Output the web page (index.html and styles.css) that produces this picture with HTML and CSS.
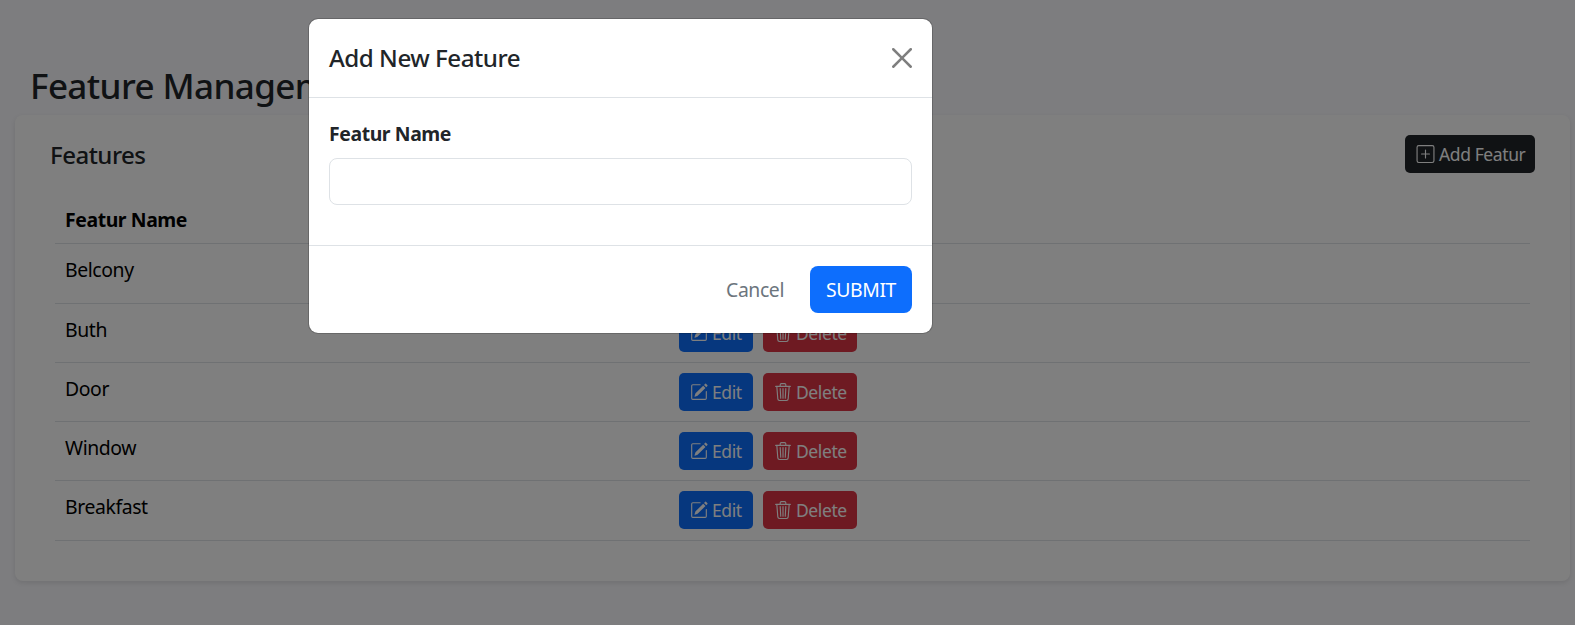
FILE: index.html
```html
<!DOCTYPE html>
<html lang="en">
<head>
<meta charset="utf-8">
<title>Feature Management</title>
<link rel="stylesheet" href="styles.css">
</head>
<body>
<svg class="sprite" aria-hidden="true">
  <symbol id="plus-square" viewBox="0 0 16 16"><path d="M14 1a1 1 0 0 1 1 1v12a1 1 0 0 1-1 1H2a1 1 0 0 1-1-1V2a1 1 0 0 1 1-1zM2 0a2 2 0 0 0-2 2v12a2 2 0 0 0 2 2h12a2 2 0 0 0 2-2V2a2 2 0 0 0-2-2z"/><path d="M8 4a.5.5 0 0 1 .5.5v3h3a.5.5 0 0 1 0 1h-3v3a.5.5 0 0 1-1 0v-3h-3a.5.5 0 0 1 0-1h3v-3A.5.5 0 0 1 8 4"/></symbol>
  <symbol id="pencil-square" viewBox="0 0 16 16"><path d="M15.502 1.94a.5.5 0 0 1 0 .706L14.459 3.69l-2-2L13.502.646a.5.5 0 0 1 .707 0l1.293 1.293zm-1.75 2.456-2-2L4.939 9.21a.5.5 0 0 0-.121.196l-.805 2.414a.25.25 0 0 0 .316.316l2.414-.805a.5.5 0 0 0 .196-.12z"/><path fill-rule="evenodd" d="M1 13.5A1.5 1.5 0 0 0 2.5 15h11a1.5 1.5 0 0 0 1.500-1.5v-6a.5.5 0 0 0-1 0v6a.5.5 0 0 1-.5.5h-11a.5.5 0 0 1-.5-.5v-11a.5.5 0 0 1 .5-.5H9a.5.5 0 0 0 0-1H2.500A1.500 1.500 0 0 0 1 2.500z"/></symbol>
  <symbol id="trash3" viewBox="0 0 16 16"><path d="M6.500 1h3a.5.5 0 0 1 .5.5v1H6v-1a.5.5 0 0 1 .5-.5M11 2.500v-1A1.500 1.500 0 0 0 9.500 0h-3A1.500 1.500 0 0 0 5 1.500v1H1.500a.5.5 0 0 0 0 1h.538l.853 10.660A2 2 0 0 0 4.885 16h6.230a2 2 0 0 0 1.994-1.840l.853-10.660h.538a.5.5 0 0 0 0-1zm1.958 1-.846 10.580a1 1 0 0 1-.997.920h-6.230a1 1 0 0 1-.997-.920L3.042 3.500zm-7.487 1a.5.5 0 0 1 .528.470l.5 8.500a.5.5 0 0 1-.998.060L5 5.030a.5.5 0 0 1 .470-.530m5.058 0a.5.5 0 0 1 .470.530l-.5 8.500a.5.5 0 1 1-.998-.060l.5-8.500a.5.5 0 0 1 .528-.470M8 4.500a.5.5 0 0 1 .5.5v8.500a.5.5 0 0 1-1 0V5a.5.5 0 0 1 .5-.5"/></symbol>
</svg>

<main class="page">
  <h1 class="page-title">Feature Management</h1>
  <section class="card">
    <header class="card-header">
      <h2 class="card-title">Features</h2>
      <button class="btn btn-dark"><svg class="icon icon-plus"><use href="#plus-square"/></svg><span>Add Featur</span></button>
    </header>
    <div class="table">
      <div class="row row-head"><span class="cell">Featur Name</span></div>
      <div class="row row-tall"><span class="cell">Belcony</span><div class="actions"><button class="btn btn-edit"><svg class="icon"><use href="#pencil-square"/></svg><span>Edit</span></button><button class="btn btn-delete"><svg class="icon"><use href="#trash3"/></svg><span>Delete</span></button></div></div>
      <div class="row"><span class="cell">Buth</span><div class="actions"><button class="btn btn-edit"><svg class="icon"><use href="#pencil-square"/></svg><span>Edit</span></button><button class="btn btn-delete"><svg class="icon"><use href="#trash3"/></svg><span>Delete</span></button></div></div>
      <div class="row"><span class="cell">Door</span><div class="actions"><button class="btn btn-edit"><svg class="icon"><use href="#pencil-square"/></svg><span>Edit</span></button><button class="btn btn-delete"><svg class="icon"><use href="#trash3"/></svg><span>Delete</span></button></div></div>
      <div class="row"><span class="cell">Window</span><div class="actions"><button class="btn btn-edit"><svg class="icon"><use href="#pencil-square"/></svg><span>Edit</span></button><button class="btn btn-delete"><svg class="icon"><use href="#trash3"/></svg><span>Delete</span></button></div></div>
      <div class="row row-tall"><span class="cell">Breakfast</span><div class="actions"><button class="btn btn-edit"><svg class="icon"><use href="#pencil-square"/></svg><span>Edit</span></button><button class="btn btn-delete"><svg class="icon"><use href="#trash3"/></svg><span>Delete</span></button></div></div>
    </div>
  </section>
</main>

<div class="backdrop">
  <div class="modal" role="dialog" aria-label="Add New Feature">
    <header class="modal-header">
      <h2 class="modal-title">Add New Feature</h2>
      <button class="close" aria-label="Close"><svg class="close-icon" viewBox="0 0 16 16"><path d="M.293.293a1 1 0 0 1 1.414 0L8 6.586 14.293.293a1 1 0 1 1 1.414 1.414L9.414 8l6.293 6.293a1 1 0 0 1-1.414 1.414L8 9.414l-6.293 6.293a1 1 0 0 1-1.414-1.414L6.586 8 .293 1.707a1 1 0 0 1 0-1.414"/></svg></button>
    </header>
    <div class="modal-body">
      <label class="label" for="feature-name">Featur Name</label>
      <input class="input" id="feature-name" type="text">
    </div>
    <footer class="modal-footer">
      <button class="modal-btn cancel">Cancel</button>
      <button class="modal-btn submit">SUBMIT</button>
    </footer>
  </div>
</div>
</body>
</html>
```
FILE: styles.css
```css
* { box-sizing: border-box; }

body {
  margin: 0;
  height: 625px;
  overflow: hidden;
  background: #fafafe;
  color: #212529;
  font-family: "Noto Sans", "Open Sans", sans-serif;
  font-size: 19.4px;
  letter-spacing: -0.4px;
}

h1, h2 { margin: 0; font-weight: 500; }

button {
  border: 0;
  padding: 0;
  font: inherit;
  letter-spacing: inherit;
  white-space: nowrap;
}

.sprite { display: none; }

.page { padding: 64px 5px 0 15px; }

.page-title {
  height: 51px;
  padding-left: 15px;
  font-size: 35px;
  line-height: 43px;
  letter-spacing: -0.6px;
}

.card {
  height: 466px;
  padding: 20px 35px 0;
  border-radius: 8px;
  background: #fff;
  box-shadow: 0 2px 5px rgba(0, 0, 0, 0.1);
}

.card-header {
  display: flex;
  justify-content: space-between;
  height: 59px;
}

.card-title {
  font-size: 24px;
  line-height: 40px;
  letter-spacing: -0.5px;
}

.btn {
  display: flex;
  align-items: center;
  height: 38px;
  border-radius: 5px;
  color: #fff;
  font-size: 17.5px;
  line-height: 38px;
}

.icon {
  width: 18px;
  height: 18px;
  margin-right: 4px;
  flex: none;
  fill: currentColor;
}

.icon-plus { width: 19px; height: 18px; }

.btn-dark { width: 130px; padding-left: 11px; background: #212529; }
.btn-edit { width: 74px; padding-left: 11px; background: #0d6efd; }
.btn-delete { width: 94px; padding-left: 11px; background: #dc3545; }

.table { padding: 0 5px; color: #000; }

.row {
  display: grid;
  grid-template-columns: 624px 1fr;
  height: 59px;
  padding-top: 10px;
  border-bottom: 1px solid #dee2e6;
}

.row-head { height: 50px; font-weight: 700; }
.row-tall { height: 60px; }

.cell { padding-left: 10px; line-height: 31px; }
.actions { display: flex; gap: 10px; }

.backdrop {
  position: absolute;
  inset: 0;
  padding: 18px 0 0 308px;
  background: rgba(0, 0, 0, 0.5);
}

.modal {
  width: 625px;
  height: 316px;
  border: 1px solid rgba(0, 0, 0, 0.18);
  border-radius: 10px;
  background: #fff;
  background-clip: padding-box;
}

.modal-header {
  display: flex;
  justify-content: space-between;
  align-items: center;
  height: 79px;
  padding: 0 20px;
  border-bottom: 1px solid #dee2e6;
}

.modal-title {
  font-size: 24.2px;
  line-height: 38px;
  letter-spacing: -0.5px;
}

.close { height: 20px; background: none; opacity: 0.5; }
.close-icon { display: block; width: 20px; height: 20px; }

.modal-body { height: 147px; padding: 20px 20px 0; }

.label {
  display: block;
  margin-bottom: 9px;
  line-height: 31px;
  font-weight: 700;
}

.input {
  display: block;
  width: 100%;
  height: 47px;
  border: 1px solid #dee2e6;
  border-radius: 8px;
  outline: 0;
}

.modal-footer {
  display: flex;
  justify-content: flex-end;
  height: 88px;
  padding: 20px;
  border-top: 1px solid #dee2e6;
}

.modal-btn { height: 47px; border-radius: 8px; }
.cancel { margin-right: 26px; background: none; color: #6c757d; }
.submit { width: 102px; background: #0d6efd; color: #fff; }
```
